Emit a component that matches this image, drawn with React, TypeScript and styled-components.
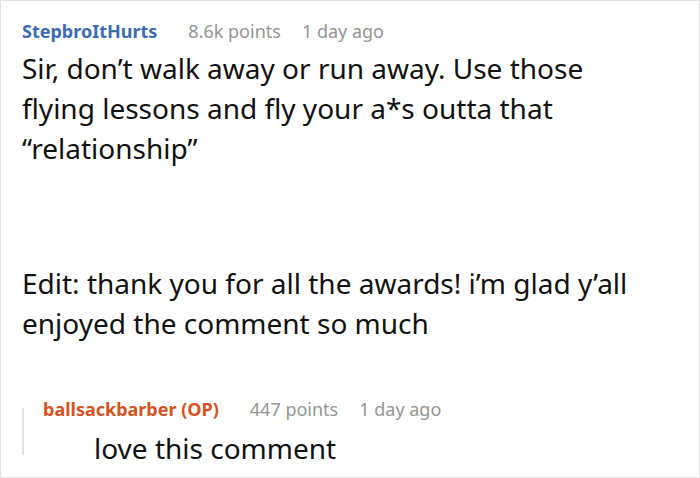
import React from "react";
import styled, { createGlobalStyle } from "styled-components";

const Global = createGlobalStyle`
  html, body { margin: 0; padding: 0; background: #fff; }
  body { font-family: "Noto Sans", "Open Sans", sans-serif; }
`;

const Card = styled.div`
  box-sizing: border-box;
  width: 700px;
  height: 478px;
  border: 1px solid #e2e2e2;
  background: #fff;
  padding: 15px 0 0 21px;
  overflow: hidden;
`;

const Meta = styled.div`
  display: flex;
  align-items: baseline;
  gap: 21px;
  height: 30px;
  line-height: 30px;
  font-size: 18px;
  margin-bottom: 2px;
`;

const Author = styled.span<{ $op?: boolean }>`
  font-weight: 700;
  margin-right: 10px;
  color: ${(p) => (p.$op ? "#d4531f" : "#3c6bb5")};
`;

const Info = styled.span`
  color: #959595;
`;

const Body = styled.div`
  font-size: 28px;
  line-height: 40px;
  color: #111;
  width: 625px;
`;

const Para = styled.p<{ $gap?: number }>`
  margin: 0 0 ${(p) => p.$gap ?? 0}px;
`;

const Reply = styled.div`
  display: flex;
  margin-top: 51px;
`;

const Bar = styled.div`
  width: 2px;
  background: #e0e0e0;
  margin: 14px 19px 0 0;
  height: 47px;
`;

const ReplyCol = styled.div`
  display: flex;
  flex-direction: column;
`;

const ReplyMeta = styled(Meta)`
  margin-bottom: 6px;
`;

const ReplyText = styled.div`
  font-size: 28px;
  line-height: 36px;
  color: #111;
  padding-left: 51px;
`;

export default function App() {
  return (
    <>
      <Global />
      <Card>
        <Meta>
          <Author>StepbroItHurts</Author>
          <Info>8.6k points</Info>
          <Info>1 day ago</Info>
        </Meta>
        <Body>
          <Para $gap={95}>
            Sir, don’t walk away or run away. Use those flying lessons and fly your a*s outta that “relationship”
          </Para>
          <Para>Edit: thank you for all the awards! i’m glad y’all enjoyed the comment so much</Para>
        </Body>
        <Reply>
          <Bar />
          <ReplyCol>
            <ReplyMeta>
              <Author $op>ballsackbarber (OP)</Author>
              <Info>447 points</Info>
              <Info>1 day ago</Info>
            </ReplyMeta>
            <ReplyText>love this comment</ReplyText>
          </ReplyCol>
        </Reply>
      </Card>
    </>
  );
}
